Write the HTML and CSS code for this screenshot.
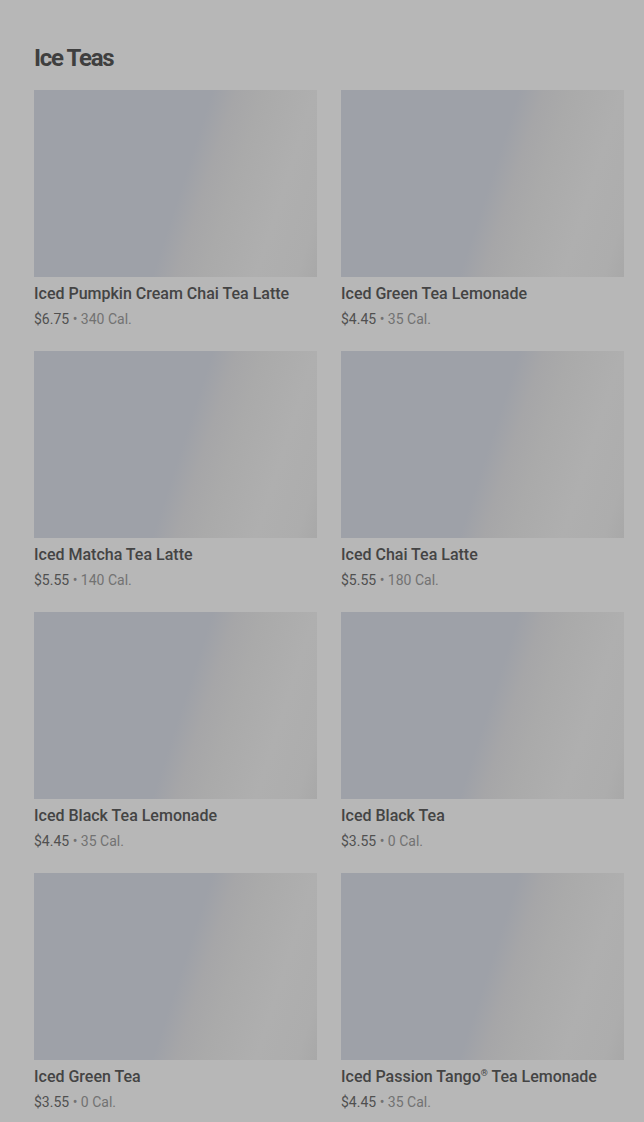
FILE: index.html
```html
<!DOCTYPE html>
<html lang="en">

<head>
    <meta charset="UTF-8">
    <meta name="viewport" content="width=device-width, initial-scale=1.0">
    <title>Ice Teas</title>
    <link rel="stylesheet" href="styles.css">
</head>

<body>
    <div class="section">
        <h2 class="section-title">Ice Teas</h2>
        <div class="grid">
            <div class="item">
                <div class="thumb"></div>
                <div class="name">Iced Pumpkin Cream Chai Tea Latte</div>
                <div class="meta"><span class="price">$6.75</span> • 340 Cal.</div>
            </div>
            <div class="item">
                <div class="thumb"></div>
                <div class="name">Iced Green Tea Lemonade</div>
                <div class="meta"><span class="price">$4.45</span> • 35 Cal.</div>
            </div>
            <div class="item">
                <div class="thumb"></div>
                <div class="name">Iced Matcha Tea Latte</div>
                <div class="meta"><span class="price">$5.55</span> • 140 Cal.</div>
            </div>
            <div class="item">
                <div class="thumb"></div>
                <div class="name">Iced Chai Tea Latte</div>
                <div class="meta"><span class="price">$5.55</span> • 180 Cal.</div>
            </div>
            <div class="item">
                <div class="thumb"></div>
                <div class="name">Iced Black Tea Lemonade</div>
                <div class="meta"><span class="price">$4.45</span> • 35 Cal.</div>
            </div>
            <div class="item">
                <div class="thumb"></div>
                <div class="name">Iced Black Tea</div>
                <div class="meta"><span class="price">$3.55</span> • 0 Cal.</div>
            </div>
            <div class="item">
                <div class="thumb"></div>
                <div class="name">Iced Green Tea</div>
                <div class="meta"><span class="price">$3.55</span> • 0 Cal.</div>
            </div>
            <div class="item">
                <div class="thumb"></div>
                <div class="name">Iced Passion Tango<sup>®</sup> Tea Lemonade</div>
                <div class="meta"><span class="price">$4.45</span> • 35 Cal.</div>
            </div>
        </div>
    </div>
</body>

</html>
```

FILE: styles.css
```css
body {
    margin: 0;
    padding: 0;
    background-color: #b7b7b7;
    font-family: Roboto, Arial, sans-serif;
    color: #3a3a3a;
}

.section {
    padding: 42px 20px 0 34px;
}

.section-title {
    margin: 0 0 16px;
    font-size: 24px;
    line-height: 32px;
    font-weight: 700;
    letter-spacing: -1.3px;
    color: #3f3f3f;
}

.grid {
    display: grid;
    grid-template-columns: 283px 283px;
    column-gap: 24px;
    row-gap: 22px;
}

.thumb {
    height: 187px;
    background: linear-gradient(108deg, #9ea1a8 0%, #9ea1a8 52%, #a6a6a8 59%, #aaaaaa 67%, #afafaf 82%, #adadad 94%, #a8a8a8 100%);
}

.name {
    margin-top: 7px;
    font-size: 16px;
    line-height: 20px;
    font-weight: 500;
    color: #444444;
    white-space: nowrap;
}

.name sup {
    font-size: 9px;
    line-height: 0;
}

.meta {
    margin-top: 5px;
    font-size: 14px;
    line-height: 20px;
    color: #727272;
}

.price {
    color: #505050;
}
```
